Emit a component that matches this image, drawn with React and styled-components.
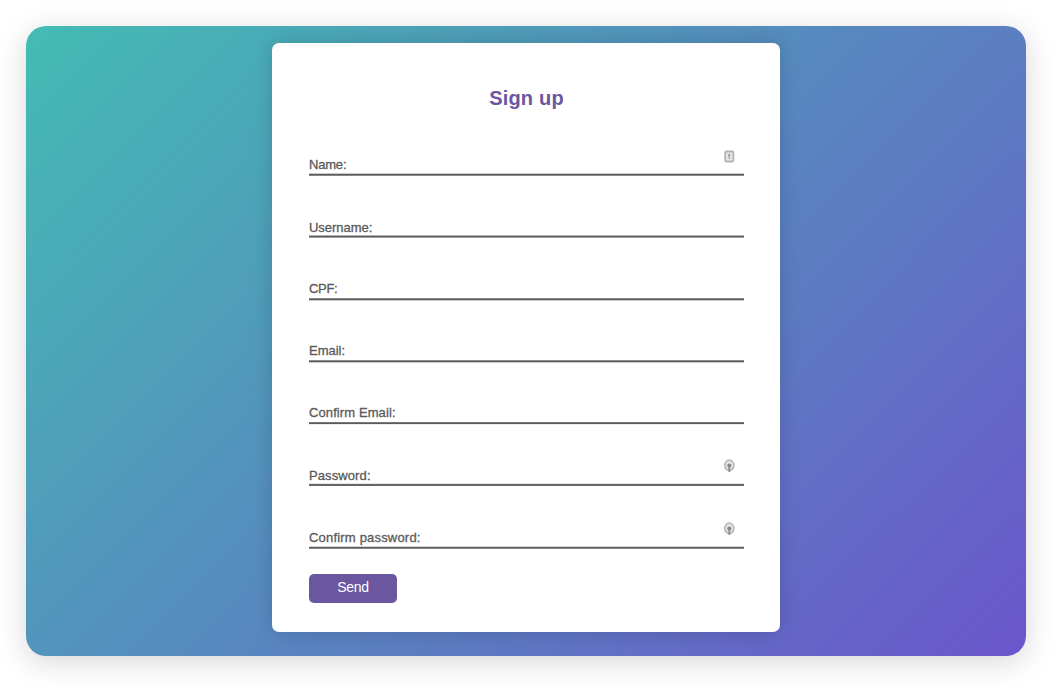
import React from 'react';
import styled, { createGlobalStyle } from 'styled-components';

const GlobalStyle = createGlobalStyle`
  * { box-sizing: border-box; }
  body {
    margin: 0;
    background: #fff;
    font-family: Arial, "Liberation Sans", sans-serif;
    overflow: hidden;
  }
`;

const Page = styled.main`
  height: 690px;
  padding: 26px 34px 34px 26px;
`;

const Backdrop = styled.section`
  width: 1000px;
  height: 630px;
  padding: 17px 246px 24px;
  border-radius: 20px;
  background: linear-gradient(135deg, #43bcb3 0%, #6b56cb 100%);
  box-shadow: 0 6px 30px rgba(0, 0, 0, 0.16);
`;

const Card = styled.form`
  display: flex;
  flex-direction: column;
  align-items: stretch;
  width: 508px;
  height: 589px;
  padding: 43px 36px 0 37px;
  border-radius: 7px;
  background: #fff;
  box-shadow: 0 0 20px rgba(0, 0, 0, 0.16);
`;

const Title = styled.h1`
  margin: 0 0 38px;
  height: 24px;
  line-height: 24px;
  text-align: center;
  font-size: 20px;
  font-weight: 700;
  letter-spacing: 0.2px;
  color: #6a57a0;
`;

const Field = styled.label`
  display: flex;
  justify-content: space-between;
  height: ${(p) => p.$height}px;
  padding-right: 9px;
  color: #5a5a5a;
  background: linear-gradient(
      ${(p) => p.$line[0]} 0 1px,
      ${(p) => p.$line[1]} 1px 2px,
      ${(p) => p.$line[2]} 2px 3px
    )
    bottom / 100% 3px no-repeat;
`;

const Caption = styled.span`
  align-self: flex-end;
  margin-bottom: ${(p) => p.$lift}px;
  font-size: 13px;
  line-height: 15px;
  letter-spacing: ${(p) => p.$tracking}px;
  -webkit-text-stroke: 0.3px currentColor;
`;

const Mark = styled.svg`
  width: 12px;
  height: 14px;
  align-self: flex-end;
  margin-bottom: 13px;
`;

const Send = styled.button`
  width: 88px;
  height: 29px;
  margin: 25px 0 0;
  padding: 0 0 3px;
  border: 0;
  border-radius: 5px;
  background: #6a57a0;
  color: #fff;
  font: 14px Arial, "Liberation Sans", sans-serif;
  letter-spacing: -0.3px;
`;

const CardMark = () => (
  <Mark viewBox="0 0 12 14">
    <rect x="2.2" y="2.5" width="8.2" height="10" rx="1" fill="#e6e6e6" stroke="#b4b4b4" strokeWidth="1.8" />
    <path d="M6.2 5v5M5 6h2.4" stroke="#8f8f8f" strokeWidth="1" fill="none" />
  </Mark>
);

const KeyMark = () => (
  <Mark viewBox="0 0 12 14">
    <ellipse cx="6.3" cy="6.3" rx="4.6" ry="5.2" fill="#e3e3e3" stroke="#b4b4b4" strokeWidth="1.5" />
    <circle cx="6.3" cy="6.6" r="2" fill="#858585" />
    <path d="M6.3 7v6" stroke="#8c8c8c" strokeWidth="1.8" />
  </Mark>
);

const SOFT_TOP = ['#cccccc', '#5c5c5c', '#858585'];
const SOFT_BOTTOM = ['#8a8a8a', '#5a5a5a', '#c8c8c8'];
const EVEN = ['#e6e6e6', '#666666', '#666666'];

const FIELDS = [
  { label: 'Name:', height: 28, lift: 4, tracking: -0.2, line: SOFT_TOP, mark: CardMark },
  { label: 'Username:', height: 62, lift: 3, tracking: -0.03, line: ['#b5b5b5', '#595959', '#a0a0a0'] },
  { label: 'CPF:', height: 63, lift: 5, tracking: -0.3, line: SOFT_BOTTOM },
  { label: 'Email:', height: 62, lift: 5, tracking: 0, line: SOFT_BOTTOM },
  { label: 'Confirm Email:', height: 62, lift: 5, tracking: 0.1, line: ['#777777', '#5c5c5c', '#eeeeee'] },
  { label: 'Password:', height: 61, lift: 3, tracking: 0.1, line: EVEN, mark: KeyMark },
  { label: 'Confirm password:', height: 63, lift: 4, tracking: 0.19, line: ['#d8d8d8', '#5c5c5c', '#858585'], mark: KeyMark },
];

export default function App() {
  return (
    <>
      <GlobalStyle />
      <Page>
        <Backdrop>
          <Card>
            <Title>Sign up</Title>
            {FIELDS.map(({ label, height, lift, tracking, line, mark: Icon }) => (
              <Field key={label} $height={height} $line={line}>
                <Caption $lift={lift} $tracking={tracking}>{label}</Caption>
                {Icon && <Icon />}
              </Field>
            ))}
            <Send type="button">Send</Send>
          </Card>
        </Backdrop>
      </Page>
    </>
  );
}
